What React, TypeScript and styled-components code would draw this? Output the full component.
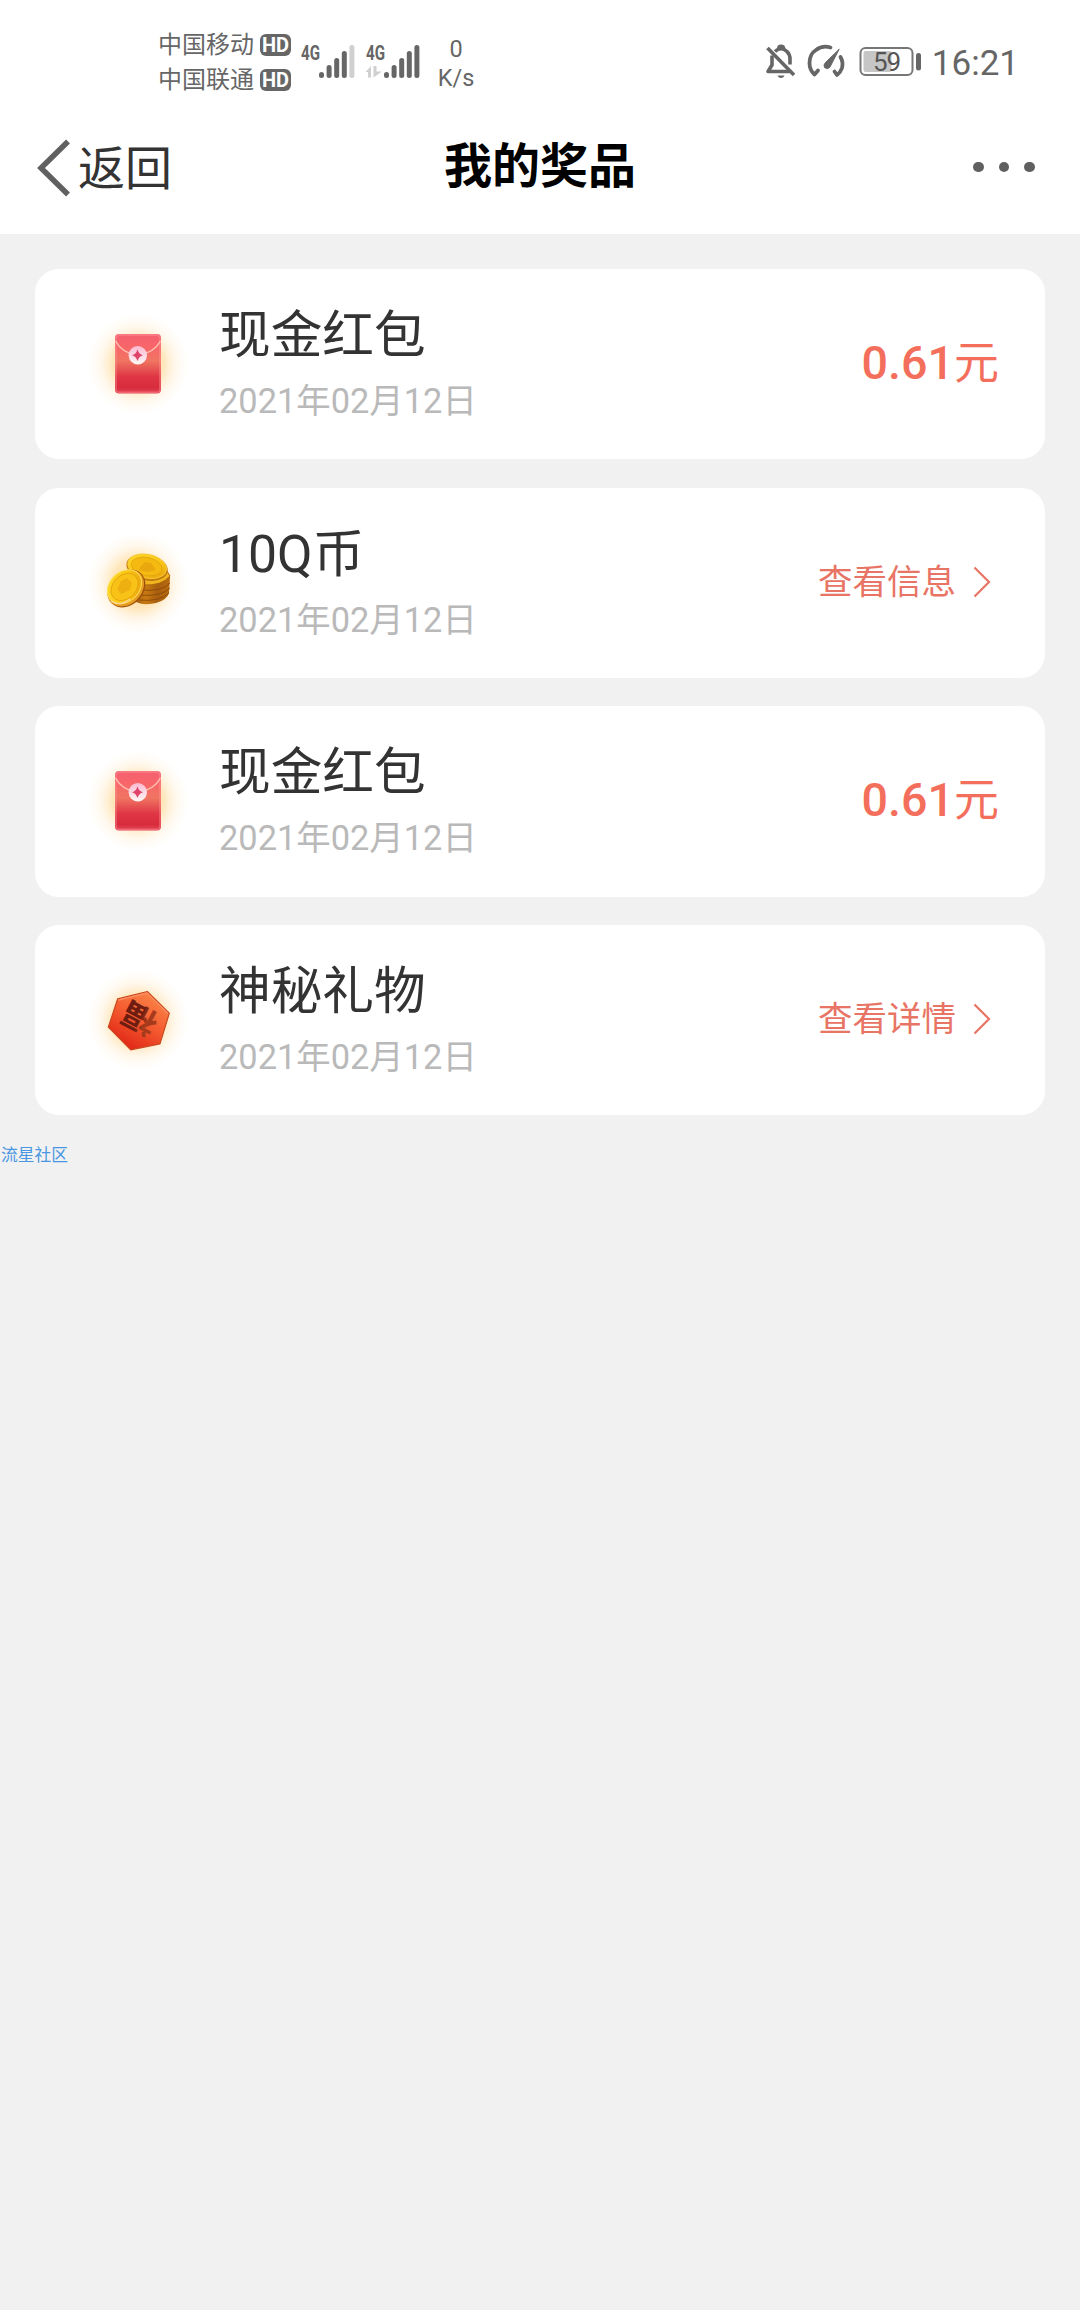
import React from 'react';
import styled, { createGlobalStyle } from 'styled-components';

const GlobalStyle = createGlobalStyle`
  * { box-sizing: border-box; }
  html, body { margin: 0; background: #f1f1f1; }
  body { font-family: Roboto, "Noto Sans CJK SC", sans-serif; }
  svg { display: block; flex: none; }
`;

const Page = styled.div`
  width: 1080px;
  height: 2310px;
  overflow: hidden;
  background: #f1f1f1;
`;

const StatusBar = styled.div`
  display: flex;
  justify-content: space-between;
  height: 100px;
  padding: 0 61px 0 158px;
  background: #fff;
  color: #666;
`;

const StatusGroup = styled.div`
  display: flex;
  height: 100px;
`;

const Carriers = styled.div`
  display: flex;
  flex-direction: column;
  padding-top: 28px;
`;

const Carrier = styled.div`
  display: flex;
  align-items: center;
  gap: 6px;
  height: 35px;
  font-size: 24px;
  line-height: 35px;
  white-space: nowrap;
`;

const HdBadge = styled.span`
  width: 31px;
  height: 22px;
  margin-bottom: 2px;
  border-radius: 6px;
  background: #666;
  color: #fff;
  font-size: 20px;
  font-weight: 700;
  line-height: 22px;
  text-align: center;
`;

const Speed = styled.div`
  width: 50px;
  margin-left: 10px;
  padding-top: 35px;
  font-size: 23.5px;
  line-height: 28.5px;
  text-align: center;
`;

const Clock = styled.div`
  margin-left: 10px;
  padding-top: 43px;
  font-size: 35px;
  line-height: 42px;
`;

const NavBar = styled.header`
  display: grid;
  grid-template-columns: 1fr auto 1fr;
  align-items: center;
  height: 134px;
  padding: 0 45px 0 45px;
  background: #fff;
`;

const Back = styled.div`
  display: flex;
  align-items: center;
  gap: 7px;
  margin-left: -8px;
  color: #333;
  font-size: 47px;
  line-height: 56px;
`;

const BackLabel = styled.span`
  padding-top: 3px;
`;

const Title = styled.h1`
  margin: 0;
  color: #000;
  font-size: 48px;
  font-weight: 700;
  line-height: 56px;
`;

const More = styled.div`
  display: flex;
  justify-content: flex-end;
  gap: 15px;
`;

const Dot = styled.span`
  width: 10.6px;
  height: 10.6px;
  border-radius: 50%;
  background: #606060;
`;

const List = styled.main`
  display: flex;
  flex-direction: column;
  gap: 28.2px;
  padding: 35px 35px 0;
`;

const Card = styled.section`
  display: flex;
  align-items: center;
  height: 190.4px;
  padding: 0 46px 0 48px;
  border-radius: 24px;
  background: #fff;
`;

const Info = styled.div`
  display: flex;
  flex: 1;
  flex-direction: column;
  gap: 10px;
  margin-left: 26px;
  padding-top: 2px;
`;

const Name = styled.div`
  color: #333;
  font-size: 51.7px;
  line-height: 62px;
`;

const DateText = styled.div`
  color: #b9b9b9;
  font-size: 34.4px;
  line-height: 48px;
`;

const Amount = styled.div`
  padding-bottom: 2px;
  color: #f46e5c;
  font-size: 45px;
  line-height: 54px;
`;

const Digits = styled.span`
  font-size: 46.6px;
  font-weight: 500;
`;

const Action = styled.div`
  display: flex;
  align-items: center;
  gap: 17px;
  padding: 0 8px 1px 0;
  color: #e87465;
  font-size: 34.5px;
  line-height: 48px;
`;

const Community = styled.footer`
  padding: 28px 0 0 1px;
  color: #4997e2;
  font-size: 16.8px;
  line-height: 24px;
`;

const Signal = ({ level, data }: { level: number; data?: boolean }) => (
  <svg width="65" height="100" viewBox="0 0 65 100">
    <text x="10" y="59.500" fontFamily="Roboto" fontWeight="700" fontSize="19.500" textLength="19" lengthAdjust="spacingAndGlyphs" fill="#666">4G</text>
    {[72, 65, 58, 51, 45].map((top, i) => (
      <rect key={top} x={28 + i * 7.6} y={top} width="5" height={78 - top} rx="2.500" fill={i < level ? '#666' : '#d0d0d0'} />
    ))}
    {data && (
      <path d="M9.500 72L15 66V77.500H12V72zM17.500 66H20.500V71.500H26L17.500 77.500z" fill="#d0d0d0" />
    )}
  </svg>
);

const BellSvg = styled.svg`
  margin-right: 9px;
`;

const MutedBell = () => (
  <BellSvg width="32" height="100" viewBox="0 0 32 100" fill="none" stroke="#666" strokeWidth="3.600">
    <path d="M2.500 48L29 75" />
    <path d="M7 55.500V65l-4 6.500h21.500" strokeLinejoin="round" />
    <path d="M10 51.500Q16 45.500 22 51.500Q25 54.500 25 59V64.500" />
    <path d="M13.500 48.500Q13.500 46 16 46Q18.800 46 18.800 48.500" strokeWidth="3" />
    <path d="M12.500 75.500h7q-1 2.500-3.500 2.500t-3.500-2.500z" fill="#666" stroke="none" />
  </BellSvg>
);

const GaugeSvg = styled.svg`
  margin-right: 13px;
`;

const Gauge = () => (
  <GaugeSvg width="40" height="100" viewBox="0 0 40 100" fill="none" stroke="#666" strokeWidth="3.800" strokeLinecap="round">
    <path d="M12 70.500L8.500 74.500Q3.500 70 3.500 63Q3.500 54 10 50Q16.500 45 24.500 47.500" strokeLinejoin="round" />
    <path d="M34.500 57Q37.500 62 36 68Q34.500 72.500 31 75L28.500 71.500" strokeLinejoin="round" />
    <path d="M33 49.500L24 67Q21.500 70 18.500 67.500Q17 65 19.500 62.500z" fill="#666" stroke="#666" strokeWidth="1" strokeLinejoin="round" />
  </GaugeSvg>
);

const Battery = () => (
  <svg width="63" height="100" viewBox="0 0 63 100">
    <rect x="1.500" y="48" width="52" height="27" rx="5" fill="#fff" stroke="#777" strokeWidth="2" />
    <rect x="4.500" y="51" width="28" height="21" rx="2" fill="#c6c6c6" />
    <text x="28" y="71" fontFamily="Roboto" fontSize="26" textAnchor="middle" textLength="28" fill="#555">59</text>
    <rect x="57" y="53" width="5" height="17.500" rx="2.500" fill="#666" />
  </svg>
);

const BackArrow = () => (
  <svg width="34" height="60" viewBox="0 0 34 60">
    <path d="M31 4.500L4 31L31 57.500" fill="none" stroke="#606060" strokeWidth="5.500" />
  </svg>
);

const Chevron = () => (
  <svg width="18" height="32" viewBox="0 0 18 32">
    <path d="M1.500 1.500L16 16L1.500 30.500" fill="none" stroke="#e87465" strokeWidth="2.200" />
  </svg>
);

const Glow = ({ id }: { id: string }) => (
  <>
    <radialGradient id={id}>
      <stop offset="0" stopColor="#ffdc9c" />
      <stop offset=".5" stopColor="#ffe4b4" stopOpacity=".9" />
      <stop offset=".72" stopColor="#fff0d8" stopOpacity=".55" />
      <stop offset="1" stopColor="#fff8ec" stopOpacity="0" />
    </radialGradient>
    <circle cx="55" cy="55" r="51" fill={`url(#${id})`} />
  </>
);

const Envelope = () => (
  <svg width="110" height="110" viewBox="0 0 110 110">
    <linearGradient id="paper" x1="0" y1="0" x2="0" y2="1">
      <stop offset="0" stopColor="#f4606f" />
      <stop offset=".2" stopColor="#f8656a" />
      <stop offset=".45" stopColor="#f07562" />
      <stop offset=".72" stopColor="#df3545" />
      <stop offset=".9" stopColor="#d82c3c" />
      <stop offset="1" stopColor="#e5485a" />
    </linearGradient>
    <linearGradient id="seal" x1="0" y1="0" x2="0" y2="1">
      <stop offset="0" stopColor="#fbb9d2" />
      <stop offset="1" stopColor="#fff8f5" />
    </linearGradient>
    <Glow id="glow-envelope" />
    <rect x="32" y="25" width="46" height="59.500" rx="4" fill="url(#paper)" />
    <rect x="33" y="26" width="44" height="57.500" rx="3.500" fill="none" stroke="#ff9a9e" strokeOpacity=".4" strokeWidth="1.800" />
    <path d="M32.500 32Q39 44 54.500 46.500Q71 44 77.500 32" fill="none" stroke="#ffc0b0" strokeWidth="1.500" />
    <circle cx="54.800" cy="46.200" r="9.200" fill="url(#seal)" />
    <path d="M54.500 40.500Q55.800 45 60 46.200Q55.800 47.500 54.500 52Q53.200 47.500 49 46.200Q53.200 45 54.500 40.500z" fill="#e0446b" />
  </svg>
);

const Coins = () => (
  <svg width="110" height="110" viewBox="0 0 110 110">
    <linearGradient id="gold" x1="0" y1="0" x2="1" y2="1">
      <stop offset="0" stopColor="#ffdc2a" />
      <stop offset=".55" stopColor="#f9c414" />
      <stop offset="1" stopColor="#e59a0a" />
    </linearGradient>
    <linearGradient id="stack" x1="0" y1="0" x2="1" y2="0">
      <stop offset="0" stopColor="#8e4909" />
      <stop offset=".4" stopColor="#c87a12" />
      <stop offset=".7" stopColor="#a75e0e" />
      <stop offset="1" stopColor="#b86b0e" />
    </linearGradient>
    <Glow id="glow-coins" />
    <path d="M47 46L46 69Q55 79 73 75Q84 72 86 65L87 49L82 38z" fill="url(#stack)" />
    <path d="M58 62Q79 64 87 55M57 67Q78 69 87 60M56 72Q77 74 86 65" fill="none" stroke="#8a480b" strokeWidth=".9" />
    <path d="M58 51Q73 53 84 43L87 48Q79 58 59 57z" fill="#f0b420" stroke="#a45e0a" strokeWidth=".8" />
    <ellipse cx="64" cy="39.500" rx="21" ry="13" transform="rotate(12 64 40)" fill="#c37b0c" />
    <ellipse cx="64" cy="38.300" rx="19.500" ry="11.800" transform="rotate(12 64 39)" fill="url(#gold)" stroke="#f7cb38" strokeWidth="1" />
    <ellipse cx="63.500" cy="38.500" rx="15.500" ry="9" transform="rotate(12 64 39)" fill="#f4ba12" stroke="#e0a00e" strokeWidth=".7" />
    <path d="M57 39l5-5 6 1 5 7-9 2-8-2z" fill="#e9a80d" />
    <ellipse cx="43.500" cy="60.500" rx="21" ry="16.500" transform="rotate(-45 43.500 60.500)" fill="#9e500d" />
    <ellipse cx="42.600" cy="60" rx="20.500" ry="16.200" transform="rotate(-45 42.600 60)" fill="#e69c20" />
    <ellipse cx="41.500" cy="58.800" rx="19" ry="14.800" transform="rotate(-45 41.500 58.800)" fill="url(#gold)" stroke="#ffe05c" strokeWidth="1" />
    <ellipse cx="41.500" cy="59" rx="15.200" ry="11.600" transform="rotate(-45 41.500 59)" fill="#f8c316" stroke="#e0a00e" strokeWidth=".8" />
    <path d="M34 61l4-8 6-3 5 5-2 7-9 4z" fill="#eeb011" />
    <path d="M28 73Q37 79 47 71" fill="none" stroke="#ffd9a0" strokeWidth="1.300" />
  </svg>
);

const MysteryGift = () => (
  <svg width="110" height="110" viewBox="0 0 110 110">
    <linearGradient id="gift" x1=".8" y1="0" x2=".2" y2="1">
      <stop offset="0" stopColor="#fb8a4a" />
      <stop offset=".5" stopColor="#f4592f" />
      <stop offset="1" stopColor="#dd1f12" />
    </linearGradient>
    <linearGradient id="ink" x1="0" y1="0" x2="1" y2="0">
      <stop offset=".3" stopColor="#a83a1c" />
      <stop offset=".5" stopColor="#6f1d10" />
    </linearGradient>
    <Glow id="glow-gift" />
    <path d="M34.700 33.800L64.300 26.500L86.300 48.200L77 78.800L47.700 84.800L25.300 62.200z" fill="url(#gift)" stroke="#c9481f" strokeWidth="1.200" strokeLinejoin="round" />
    <path d="M35.500 35L64 28L85 48.500" fill="none" stroke="#ff8d62" strokeWidth="1.300" />
    <text x="0" y="11.500" transform="translate(56.500 54) rotate(208) scale(1.150 1)" textAnchor="middle" fontFamily="Noto Sans CJK SC" fontWeight="700" fontSize="31" fill="url(#ink)">福</text>
  </svg>
);

type Prize = { icon: React.ReactNode; name: string; amount?: string; action?: string };

const prizes: Prize[] = [
  { icon: <Envelope />, name: '现金红包', amount: '0.61' },
  { icon: <Coins />, name: '10Q币', action: '查看信息' },
  { icon: <Envelope />, name: '现金红包', amount: '0.61' },
  { icon: <MysteryGift />, name: '神秘礼物', action: '查看详情' },
];

export default function App() {
  return (
    <Page>
      <GlobalStyle />
      <StatusBar>
        <StatusGroup>
          <Carriers>
            <Carrier>中国移动<HdBadge>HD</HdBadge></Carrier>
            <Carrier>中国联通<HdBadge>HD</HdBadge></Carrier>
          </Carriers>
          <Signal level={4} />
          <Signal level={5} data />
          <Speed>0<br />K/s</Speed>
        </StatusGroup>
        <StatusGroup>
          <MutedBell />
          <Gauge />
          <Battery />
          <Clock>16:21</Clock>
        </StatusGroup>
      </StatusBar>
      <NavBar>
        <Back><BackArrow /><BackLabel>返回</BackLabel></Back>
        <Title>我的奖品</Title>
        <More><Dot /><Dot /><Dot /></More>
      </NavBar>
      <List>
        {prizes.map((prize, i) => (
          <Card key={i}>
            {prize.icon}
            <Info>
              <Name>{prize.name}</Name>
              <DateText>2021年02月12日</DateText>
            </Info>
            {prize.amount && <Amount><Digits>{prize.amount}</Digits>元</Amount>}
            {prize.action && <Action>{prize.action}<Chevron /></Action>}
          </Card>
        ))}
      </List>
      <Community>流星社区</Community>
    </Page>
  );
}
